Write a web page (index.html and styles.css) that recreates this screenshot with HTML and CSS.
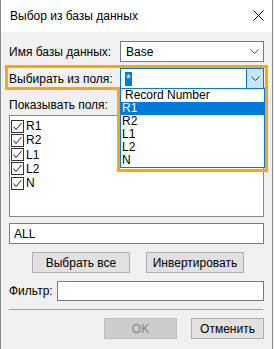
FILE: index.html
```html
<!DOCTYPE html>
<html lang="ru">
<head>
    <meta charset="UTF-8">
    <meta name="viewport" content="width=device-width, initial-scale=1.0">
    <title>Выбор из базы данных</title>
    <link rel="stylesheet" href="styles.css">
</head>
<body>
    <div class="window">
        <div class="titlebar">
            <span class="title">Выбор из базы данных</span>
            <svg class="close" width="11" height="11" viewBox="0 0 11 11">
                <path d="M0.5 0.5 L10.5 10.5 M10.5 0.5 L0.5 10.5" stroke="#000" stroke-width="1" fill="none"/>
            </svg>
        </div>

        <div class="content">
            <div class="field-row row-db">
                <span class="label">Имя базы данных:</span>
                <div class="combo">
                    <span class="combo-text">Base</span>
                    <span class="combo-btn">
                        <svg width="9" height="5" viewBox="0 0 9 5"><path d="M0.5 0.5 L4.5 4.5 L8.5 0.5" stroke="#555" fill="none"/></svg>
                    </span>
                </div>
            </div>

            <div class="field-row row-from">
                <span class="label">Выбирать из поля:</span>
                <div class="combo combo-open">
                    <span class="combo-text"><span class="selected-text">*</span></span>
                    <span class="combo-btn">
                        <svg width="9" height="5" viewBox="0 0 9 5"><path d="M0.5 0.5 L4.5 4.5 L8.5 0.5" stroke="#333" fill="none"/></svg>
                    </span>
                    <ul class="dropdown">
                        <li class="first">Record Number</li>
                        <li class="active">R1</li>
                        <li>R2</li>
                        <li>L1</li>
                        <li>L2</li>
                        <li>N</li>
                    </ul>
                </div>
            </div>

            <div class="section-label">Показывать поля:</div>
            <div class="checklist">
                <div class="check-item"><span class="checkbox"><svg width="11" height="11" viewBox="0 0 11 11"><path d="M1.5 5.5 L4 8.5 L9.5 2" stroke="#444" stroke-width="1.1" fill="none"/></svg></span>R1</div>
                <div class="check-item"><span class="checkbox"><svg width="11" height="11" viewBox="0 0 11 11"><path d="M1.5 5.5 L4 8.5 L9.5 2" stroke="#444" stroke-width="1.1" fill="none"/></svg></span>R2</div>
                <div class="check-item"><span class="checkbox"><svg width="11" height="11" viewBox="0 0 11 11"><path d="M1.5 5.5 L4 8.5 L9.5 2" stroke="#444" stroke-width="1.1" fill="none"/></svg></span>L1</div>
                <div class="check-item"><span class="checkbox"><svg width="11" height="11" viewBox="0 0 11 11"><path d="M1.5 5.5 L4 8.5 L9.5 2" stroke="#444" stroke-width="1.1" fill="none"/></svg></span>L2</div>
                <div class="check-item"><span class="checkbox"><svg width="11" height="11" viewBox="0 0 11 11"><path d="M1.5 5.5 L4 8.5 L9.5 2" stroke="#444" stroke-width="1.1" fill="none"/></svg></span>N</div>
            </div>

            <div class="textbox textbox-all">ALL</div>

            <div class="btn-row">
                <button class="btn btn-wide">Выбрать все</button>
                <button class="btn btn-wide">Инвертировать</button>
            </div>

            <div class="filter-row">
                <span class="label">Фильтр:</span>
                <div class="textbox textbox-filter"></div>
            </div>

            <div class="separator"></div>

            <div class="dialog-buttons">
                <button class="btn btn-dialog" disabled>OK</button>
                <button class="btn btn-dialog">Отменить</button>
            </div>
        </div>

        <!-- orange callout around the open combo -->
        <div class="highlight hl-row"></div>
        <div class="highlight hl-list"></div>
    </div>
</body>
</html>
```

FILE: styles.css
```css
* {
    box-sizing: border-box;
}
body {
    margin: 0;
    background: #f0f0f0;
    font-family: "Liberation Sans", Arial, sans-serif;
    font-size: 12px;
    color: #000;
}
.window {
    position: relative;
    width: 273px;
    height: 349px;
    background: #f0f0f0;
    border-left: 1px solid #8c8c8c;
    border-right: 1px solid #8c8c8c;
}
.titlebar {
    height: 32px;
    background: #fff;
    display: flex;
    align-items: center;
    justify-content: space-between;
    padding: 0 8px 1px 9px;
}
.title {
    font-size: 12px;
}
.close {
    display: block;
    margin-top: -1px;
}
.content {
    padding: 0 8px;
    display: flex;
    flex-direction: column;
}
.field-row {
    display: flex;
    align-items: center;
    height: 21px;
}
.row-db {
    margin-top: 9px;
}
.row-from {
    margin-top: 6px;
    position: relative;
    z-index: 3;
}
.field-row .label {
    width: 111px;
}
.combo {
    position: relative;
    width: 144px;
    height: 21px;
    background: #fff;
    border: 1px solid #7a7a7a;
    display: flex;
    align-items: center;
}
.combo-text {
    flex: 1;
    padding-left: 5px;
}
.combo-btn {
    width: 17px;
    height: 100%;
    display: flex;
    align-items: center;
    justify-content: center;
}
.combo-open {
    border-color: #0078d7;
}
.combo-open .combo-text {
    padding-left: 4px;
}
.combo-open .combo-btn {
    background: #cce4f7;
    border-left: 1px solid #0078d7;
}
.selected-text {
    display: inline-block;
    background: #0078d7;
    color: #fff;
    padding: 0 1px;
    line-height: 14px;
}
.dropdown {
    position: absolute;
    top: 19px;
    left: -1px;
    width: 145px;
    height: 80px;
    margin: 0;
    padding: 0;
    list-style: none;
    background: #fff;
    border: 1px solid #0078d7;
}
.dropdown li {
    height: 13px;
    line-height: 13px;
    padding-left: 1px;
}
.dropdown li.first {
    padding-left: 4px;
}
.dropdown li.active {
    background: #0078d7;
    color: #fff;
}
.section-label {
    margin-top: 9px;
    height: 14px;
    line-height: 14px;
}
.checklist {
    margin-top: 3px;
    height: 102px;
    background: #fff;
    border: 1px solid #828790;
    padding: 3px 0 0 1px;
}
.check-item {
    display: flex;
    align-items: center;
    height: 14.25px;
}
.checkbox {
    width: 13px;
    height: 13px;
    border: 1px solid #333;
    background: #fff;
    display: flex;
    align-items: center;
    justify-content: center;
    margin-right: 2px;
}
.checkbox svg {
    display: block;
}
.textbox {
    height: 21px;
    background: #fff;
    border: 1px solid #7a7a7a;
    display: flex;
    align-items: center;
    padding-left: 4px;
}
.textbox-all {
    margin-top: 6px;
}
.btn-row {
    display: flex;
    gap: 16px;
    margin-top: 8px;
    padding-left: 23px;
}
.btn {
    font-family: inherit;
    font-size: 12px;
    color: #000;
    height: 21px;
    padding: 0;
    background: #e1e1e1;
    border: 1px solid #adadad;
    border-radius: 0;
}
.btn-wide {
    width: 98px;
}
.filter-row {
    display: flex;
    align-items: center;
    margin-top: 8px;
}
.filter-row .label {
    width: 48px;
}
.textbox-filter {
    flex: 1;
    height: 20px;
}
.separator {
    margin-top: 8px;
    height: 1px;
    background: #a0a0a0;
    margin-right: 1px;
}
.dialog-buttons {
    display: flex;
    justify-content: flex-end;
    gap: 14px;
    margin-top: 8px;
}
.btn-dialog {
    width: 73px;
}
.btn:disabled {
    background: #cccccc;
    border-color: #bfbfbf;
    color: #838383;
}
.highlight {
    position: absolute;
    border: 3px solid #f5a70f;
    z-index: 2;
}
.hl-row {
    left: 4px;
    top: 65px;
    width: 263px;
    height: 25px;
}
.hl-list {
    left: 116px;
    top: 87px;
    width: 151px;
    height: 85px;
    border-top: none;
}
```
